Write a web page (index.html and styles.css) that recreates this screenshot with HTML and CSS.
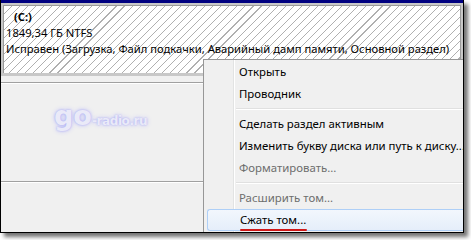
FILE: index.html
```html
<!DOCTYPE html>
<html>
<head>
<meta charset="utf-8">
<link rel="stylesheet" href="styles.css">
</head>
<body>
<div class="frame">
  <div class="volume">
    <div class="volume-inner">
      <div class="hatch">
        <div class="vol-name">(C:)</div>
        <div class="vol-line">1849,34 ГБ NTFS</div>
        <div class="vol-line">Исправен (Загрузка, Файл подкачки, Аварийный дамп памяти, Основной раздел)</div>
      </div>
    </div>
  </div>
  <div class="pane">
    <div class="pane-row pane-top">
      <div class="watermark"><span class="wm-big">go</span><span class="wm-small">-radio.ru</span></div>
    </div>
    <div class="pane-row pane-bottom"></div>
  </div>
  <div class="menu">
    <div class="item">Открыть</div>
    <div class="item">Проводник</div>
    <div class="sep"></div>
    <div class="item">Сделать раздел активным</div>
    <div class="item">Изменить букву диска или путь к диску...</div>
    <div class="item disabled">Форматировать...</div>
    <div class="sep"></div>
    <div class="item disabled">Расширить том...</div>
    <div class="item hover"><span class="mark">Сжать том...</span></div>
  </div>
</div>
</body>
</html>
```

FILE: styles.css
```css
html, body {
  margin: 0;
  padding: 0;
  background: #ffffff;
  width: 471px;
  height: 240px;
  overflow: hidden;
}
body {
  font-family: "Noto Sans", "DejaVu Sans", sans-serif;
  font-size: 11.2px;
  color: #000;
}
.frame {
  position: relative;
  box-sizing: border-box;
  width: 464px;
  height: 233px;
  border-left: 1px solid #000;
  border-right: 1px solid #000;
  border-bottom: 1px solid #000;
  background: #f0f0f0;
  box-shadow: 4px 4px 4px rgba(0, 0, 0, 0.55);
  overflow: hidden;
  display: flex;
  flex-direction: column;
}
.volume {
  border-top: 3px solid #000080;
  background: #c8c8c8;
  padding: 2px 2px 3px 2px;
}
.volume-inner {
  border: 1px solid #9a9a9a;
  border-bottom: none;
}
.hatch {
  height: 67px;
  box-sizing: border-box;
  padding: 3px 0 0 2px;
  background-color: #fff;
  background-image: repeating-linear-gradient(-45deg, #fff 0px, #fff 4.9px, #b0b0b0 4.9px, #b0b0b0 5.7px);
  line-height: 16px;
  white-space: nowrap;
}
.vol-name {
  font-weight: bold;
  padding-left: 8px;
}
.pane {
  flex: 1;
  display: flex;
  flex-direction: column;
  border-top: 6px solid #f0f0f0;
}
.pane-row {
  border-top: 1px solid #a0a0a0;
  box-shadow: inset 0 1px 0 #fff;
}
.pane-top {
  height: 98px;
  position: relative;
}
.pane-bottom {
  flex: 1;
}
.watermark {
  position: absolute;
  left: 53px;
  top: 17px;
  color: #eaeaf8;
  text-shadow: 0 0 2px #a8a8f4, 0 0 5px #bcbcf8;
  font-family: "DejaVu Sans", sans-serif;
  font-weight: bold;
  white-space: nowrap;
}
.wm-big {
  font-size: 27px;
  letter-spacing: 0px;
}
.wm-small {
  font-size: 12px;
  letter-spacing: -0.4px;
}
.menu {
  position: absolute;
  left: 202px;
  right: 0;
  top: 59px;
  bottom: 0;
  box-sizing: border-box;
  border: 1px solid #979797;
  border-right: none;
  border-bottom: none;
  background: #f0f0f0;
  padding: 1px 0 0 2px;
  font-size: 11.4px;
  background-image: linear-gradient(to right, transparent 29px, #e2e3e3 29px, #e2e3e3 30px, #fff 30px, #fff 31px, transparent 31px);
}
.item {
  height: 22px;
  line-height: 22px;
  padding-left: 33px;
  box-sizing: border-box;
  white-space: nowrap;
}
.item.disabled {
  color: #6d6d6d;
}
.sep {
  height: 8px;
  margin-left: 30px;
  background: linear-gradient(to bottom, transparent 3px, #e0e0e0 3px, #e0e0e0 4px, #fff 4px, #fff 5px, transparent 5px);
}
.item.hover {
  border: 1px solid #aecff7;
  border-right: none;
  border-radius: 3px 0 0 3px;
  background: linear-gradient(to bottom, #f2f7fd, #e5eefa);
  padding-left: 32px;
  line-height: 20px;
  margin-left: 1px;
}
.mark {
  position: relative;
}
.mark::after {
  content: "";
  position: absolute;
  left: 0;
  right: -1px;
  bottom: -4px;
  height: 2px;
  background: #d01818;
  border-radius: 1px;
}
```
